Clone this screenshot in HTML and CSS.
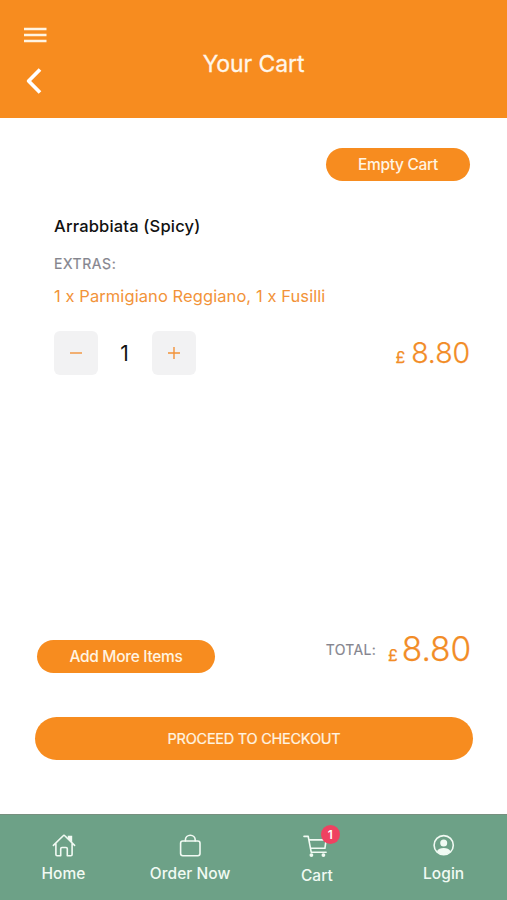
FILE: index.html
```html
<!DOCTYPE html>
<html lang="en">
<head>
<meta charset="utf-8">
<title>Your Cart</title>
<link rel="stylesheet" href="styles.css">
</head>
<body>
<div class="app">
  <header class="header">
    <div class="header-actions">
      <svg class="menu" viewBox="0 0 24 16"><path d="M1 1.9h22.5M1 8h22.5M1 14.1h22.5"/></svg>
      <svg class="back" viewBox="0 0 18 28"><path d="M16 2.5 4.6 14 16 25.5"/></svg>
    </div>
    <h1 class="title">Your Cart</h1>
  </header>
  <main class="main">
    <button class="btn btn-empty"><span>Empty Cart</span></button>
    <section class="item">
      <h2 class="item-name">Arrabbiata (Spicy)</h2>
      <p class="extras-label">EXTRAS:</p>
      <p class="extras">1 x Parmigiano Reggiano, 1 x Fusilli</p>
      <div class="item-row">
        <div class="stepper">
          <button class="step"><svg viewBox="0 0 14 14"><path d="M1 7h12"/></svg></button>
          <span class="qty">1</span>
          <button class="step"><svg viewBox="0 0 14 14"><path d="M1 7h12M7 1v12"/></svg></button>
        </div>
        <div class="price price-item"><span class="pound">£</span><span class="amount">8.80</span></div>
      </div>
    </section>
    <section class="summary">
      <button class="btn btn-add"><span>Add More Items</span></button>
      <div class="total">
        <span class="total-label">TOTAL:</span>
        <div class="price price-total"><span class="pound">£</span><span class="amount">8.80</span></div>
      </div>
    </section>
    <button class="btn btn-checkout"><span>PROCEED TO CHECKOUT</span></button>
  </main>
  <nav class="tabs">
    <a class="tab">
      <svg class="icon icon-home" viewBox="0 0 24 24"><path d="M1.4 11.4 11.2 1.7a1.1 1.1 0 0 1 1.6 0l9.8 9.7M3.9 9.2v11.4c0 .7.5 1.2 1.2 1.2h3.6v-7c0-.8.5-1.3 1.3-1.3h4c.8 0 1.3.5 1.3 1.3v7h3.6c.7 0 1.2-.5 1.2-1.2V9.2"/><path class="solid" d="M15.8 1.8h4.4v7l-4.4-4.3Z"/></svg>
      <span class="label">Home</span>
    </a>
    <a class="tab">
      <svg class="icon" viewBox="0 0 24 24"><rect x="2.6" y="7" width="19.4" height="14.8" rx="2.2"/><path d="M7.4 6.9v-.8a4.9 4.9 0 0 1 9.8 0v.8"/></svg>
      <span class="label">Order Now</span>
    </a>
    <a class="tab tab-cart">
      <span class="icon-wrap">
        <svg class="icon" viewBox="0 0 24 24"><path d="M-1 .4h4.2l3 15.8h14.9M3.9 3.9h17.2l-1.2 8.4H5.5"/><circle class="solid" cx="6.4" cy="19.1" r="1.9"/><circle class="solid" cx="18.4" cy="19.1" r="1.9"/></svg>
        <span class="badge">1</span>
      </span>
      <span class="label cart">Cart</span>
    </a>
    <a class="tab">
      <svg class="icon" viewBox="0 0 24 24"><circle cx="11.7" cy="11.2" r="9.6"/><circle class="solid" cx="11.7" cy="9" r="3.5"/><path class="solid" d="M4.9 17.2c1.2-2.4 3.7-3.2 6.8-3.2s5.6.8 6.8 3.2a9.2 9.2 0 0 1-6.8 3.4 9.2 9.2 0 0 1-6.8-3.4Z"/></svg>
      <span class="label">Login</span>
    </a>
  </nav>
</div>
</body>
</html>
```

FILE: styles.css
```css
* { box-sizing: border-box; }
body { margin: 0; background: #fff; font-family: Inter, "Liberation Sans", sans-serif; color: #111; }
h1, h2, p { margin: 0; font-weight: 400; }
button { border: 0; padding: 0; font: inherit; }
svg { display: block; flex: none; fill: none; }
.app { width: 507px; height: 900px; display: flex; flex-direction: column; overflow: hidden; }

.header { height: 118px; flex: none; background: #f78c1f; display: grid; grid-template-columns: 80px 1fr 80px; }
.header-actions { padding: 27px 0 0 23px; }
.menu { width: 24px; height: 16px; stroke: #fff4e2; stroke-width: 2.5; }
.back { width: 18px; height: 28px; margin: 24px 0 0 1px; stroke: #fff; stroke-width: 3.7; stroke-linejoin: round; }
.title { padding-top: 49px; text-align: center; color: #fff6e9; font-size: 23px; line-height: 30px; letter-spacing: -.1px; -webkit-text-stroke: .3px #fff6e9; }

.main { flex: 1; display: flex; flex-direction: column; }
.btn { display: flex; align-items: center; justify-content: center; flex: none; background: #f78c1f; color: #fff4e2; border-radius: 22px; white-space: nowrap; }
.btn-empty { align-self: flex-end; width: 144px; height: 33px; margin: 30px 37px 0 0; font-size: 15.5px; font-weight: 500; letter-spacing: -.3px; }
.item { padding: 33px 37px 0 54px; }
.item-name { font-size: 16.5px; line-height: 24px; font-weight: 500; letter-spacing: .18px; }
.extras-label { margin-top: 16px; font-size: 14px; line-height: 20px; letter-spacing: .6px; color: #85858e; -webkit-text-stroke: .2px #85858e; }
.extras { margin-top: 12px; font-size: 16.5px; line-height: 20px; letter-spacing: .08px; color: #f29339; white-space: nowrap; }
.item-row { display: flex; justify-content: space-between; align-items: center; margin-top: 25px; height: 44px; }
.stepper { display: flex; align-items: center; }
.step { width: 44px; height: 44px; border-radius: 6px; background: #f2f2f3; display: grid; place-items: center; }
.step svg { width: 14px; height: 14px; margin-right: 1px; stroke: #f29339; stroke-width: 1.4; }
.qty { width: 54px; padding-right: 1px; text-align: center; font-size: 21px; }
.price { display: flex; align-items: baseline; color: #f28c26; gap: 6px; line-height: 36px; -webkit-text-stroke: .25px #f28c26; }
.price-item { padding-top: 3px; }
.pound { font-size: 16px; }
.amount { font-size: 28.5px; font-weight: 350; letter-spacing: -.1px; }
.summary { display: flex; justify-content: space-between; align-items: flex-start; margin-top: auto; padding: 0 36px 0 37px; height: 47px; }
.btn-add { width: 178px; height: 33px; margin-top: 9px; font-size: 15.5px; font-weight: 500; letter-spacing: -.3px; }
.total { display: flex; align-items: flex-start; gap: 12px; }
.total-label { padding-top: 10px; font-size: 14px; line-height: 18px; letter-spacing: .3px; color: #85858e; -webkit-text-stroke: .15px #85858e; }
.price-total { gap: 4px; }
.price-total .amount { font-size: 33.5px; }
.btn-checkout { height: 43px; margin: 39px 34px 54px 35px; font-size: 14.5px; letter-spacing: -.25px; -webkit-text-stroke: .2px #fff4e2; }

.tabs { height: 86px; flex: none; display: grid; grid-template-columns: repeat(4, 1fr); background: #6da187; border-top: 1px solid #77907f; padding-top: 19px; }
.tab { display: flex; flex-direction: column; align-items: center; color: #f1faf3; }
.icon { width: 24px; height: 24px; overflow: visible; stroke: #f1faf3; stroke-width: 1.6; stroke-linecap: round; stroke-linejoin: round; }
.icon-home { margin-left: 2px; }
.icon .solid { fill: #f1faf3; stroke: none; }
.label { margin-top: 5px; font-size: 15.5px; line-height: 22px; font-weight: 500; letter-spacing: .05px; white-space: nowrap; }
.cart { font-weight: 450; }
.tab-cart { padding-top: 2px; }
.icon-wrap { position: relative; }
.badge { position: absolute; top: -11px; left: 16px; width: 19px; height: 19px; border-radius: 50%; background: #ef4261; color: #fff; font-size: 12px; line-height: 19px; text-align: center; font-weight: 600; }
```
